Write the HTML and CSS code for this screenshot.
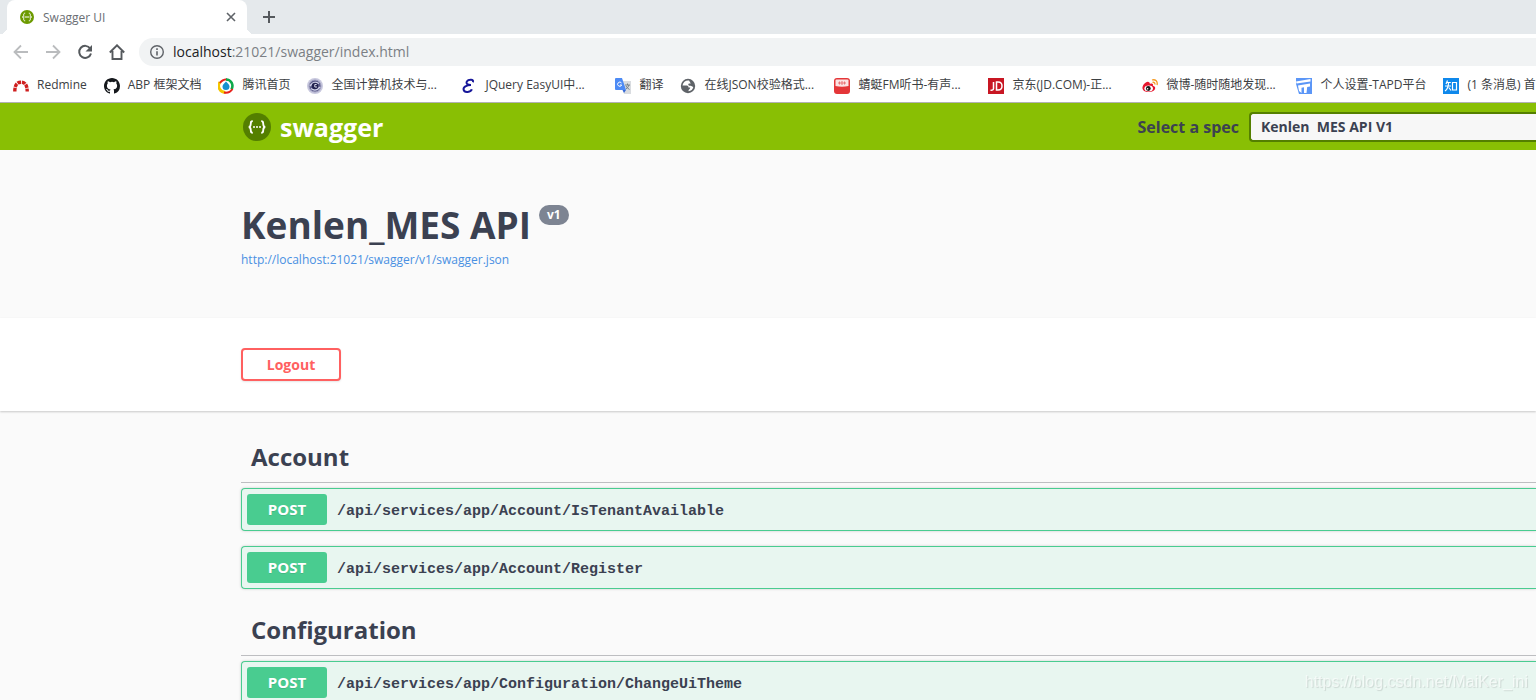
FILE: index.html
```html
<!DOCTYPE html>
<html lang="zh-CN">
<head>
<meta charset="utf-8">
<title>Swagger UI</title>
<link rel="stylesheet" href="styles.css">
</head>
<body>
<header class="browser">
  <div class="tabs">
    <div class="tab">
      <svg class="tab-icon" viewBox="0 0 16 16"><circle cx="8" cy="8" r="7" fill="#6c9a00"/><path d="M6.200 4.200c-1.600 0-1.500.8-1.500 1.900S4.600 8 3.300 8c1.300 0 1.400.8 1.400 1.900s-.1 1.900 1.500 1.900M9.800 4.200c1.600 0 1.500.8 1.500 1.900S11.400 8 12.700 8c-1.300 0-1.400.8-1.400 1.900s.1 1.900-1.500 1.900M5.500 8h5" fill="none" stroke="#fff" stroke-width="1"/></svg>
      <span class="tab-title">Swagger UI</span>
      <button class="icon-button" aria-label="Close tab"><svg width="16" height="16" viewBox="0 0 16 16"><path d="M4 4l8 8M12 4l-8 8" stroke="#5f6368" stroke-width="1.600"/></svg></button>
    </div>
    <button class="icon-button" aria-label="New tab"><svg width="16" height="16" viewBox="0 0 16 16"><path d="M8 2v12M2 8h12" stroke="#55595d" stroke-width="2"/></svg></button>
  </div>
  <nav class="toolbar">
    <button class="icon-button" aria-label="Back"><svg width="16" height="16" viewBox="0 0 16 16"><path d="M15 8H2M8 1.500L1.500 8 8 14.500" fill="none" stroke="#babcbe" stroke-width="1.800"/></svg></button>
    <button class="icon-button" aria-label="Forward"><svg width="16" height="16" viewBox="0 0 16 16"><path d="M1 8h13M8 1.500L14.500 8 8 14.500" fill="none" stroke="#babcbe" stroke-width="1.800"/></svg></button>
    <button class="icon-button" aria-label="Reload"><svg width="16" height="16" viewBox="0 0 16 16"><path d="M13.200 4.500A6 6 0 1 0 14 9.500" fill="none" stroke="#55595d" stroke-width="2"/><path d="M15 1v6.500H8.500z" fill="#55595d"/></svg></button>
    <button class="icon-button" aria-label="Home"><svg width="16" height="16" viewBox="0 0 16 16"><path d="M.8 8.500L8 1.300l7.200 7.200M3.500 7v8h9V7" fill="none" stroke="#55595d" stroke-width="1.900"/></svg></button>
    <div class="address">
      <svg width="16" height="16" viewBox="0 0 16 16"><circle cx="8" cy="8" r="6.300" fill="none" stroke="#5f6368" stroke-width="1.400"/><path d="M8 7.200v4.300M8 4.300v1.700" stroke="#5f6368" stroke-width="1.600"/></svg>
      <span class="url"><span class="host">localhost</span>:21021/swagger/index.html</span>
    </div>
  </nav>
  <nav class="bookmarks">
    <a class="bookmark" href="#"><svg viewBox="0 0 16 16"><path d="M1.800 13.500C1.800 7 4 4.200 8 4.200s6.200 2.800 6.200 9.300" fill="none" stroke="#cf1f1f" stroke-width="3.400" stroke-dasharray="3.700 .8"/></svg><span>Redmine</span></a>
    <a class="bookmark" href="#"><svg viewBox="0 0 16 16"><path fill="#15181c" d="M8 0C3.580 0 0 3.580 0 8c0 3.540 2.290 6.530 5.470 7.590.4.070.55-.17.55-.38 0-.19-.01-.82-.01-1.490-2.010.37-2.530-.49-2.690-.94-.09-.23-.48-.94-.82-1.130-.28-.15-.68-.52-.01-.53.63-.01 1.080.58 1.230.82.72 1.210 1.870.87 2.330.66.070-.52.28-.87.51-1.070-1.780-.2-3.640-.89-3.640-3.950 0-.87.31-1.590.82-2.150-.08-.2-.36-1.020.08-2.120 0 0 .67-.21 2.200.82a7.600 7.600 0 0 1 4 0c1.530-1.040 2.200-.82 2.200-.82.44 1.100.16 1.920.08 2.120.51.56.82 1.270.82 2.150 0 3.070-1.870 3.750-3.650 3.950.29.25.54.73.54 1.480 0 1.070-.01 1.930-.01 2.200 0 .21.15.46.55.38A8 8 0 0 0 16 8c0-4.420-3.580-8-8-8z"/></svg><span>ABP 框架文档</span></a>
    <a class="bookmark" href="#"><svg viewBox="0 0 16 16"><g fill="none"><path d="M7.500 14.500A6.600 6.600 0 0 1 2 4" stroke="#f4c600" stroke-width="2.800"/><path d="M2 5Q4 1.500 9 1.200" stroke="#e7211a" stroke-width="2"/><path d="M8 1.500c5 0 8 5 5.500 10" stroke="#0ca94b" stroke-width="2.600"/><path d="M14.500 11Q11.500 15.500 6 14.600" stroke="#e7211a" stroke-width="2"/></g><path d="M8 3.500c1 1.500 3.500 2.600 3.500 5.100a3.500 3.500 0 0 1-7 0C4.500 6.100 7 5 8 3.500z" fill="#1590d0"/></svg><span>腾讯首页</span></a>
    <a class="bookmark bookmark-long" href="#"><svg viewBox="0 0 16 16"><circle cx="8" cy="8" r="8" fill="#c8c8de"/><circle cx="8" cy="8" r="6" fill="#5d5d8c" stroke="#a0a0c0"/><path d="M3 8Q6.500 2.500 12 5.500M4 10.500Q9 14 13 9" fill="none" stroke="#d1d2e8" stroke-width="1.400"/><circle cx="8" cy="8" r="3.200" fill="#22224f"/><path d="M9.700 6.500H7.800V9H10" fill="none" stroke="#d9d9ec"/></svg><span>全国计算机技术与...</span></a>
    <a class="bookmark bookmark-long" href="#"><svg viewBox="0 0 16 16"><path d="M11.800 4.200C13.500 1 7.500.8 5.800 3.600c-1.200 2.200.8 3.400 4.200 3.400C5.500 7 2 9.200 2.600 11.800c.8 3.400 7.500 2.400 8.200-.6" fill="none" stroke="#17179a" stroke-width="2"/></svg><span>JQuery EasyUI中...</span></a>
    <a class="bookmark" href="#"><svg viewBox="0 0 16 16"><path d="M6 3h10v13H9z" fill="#d9dce0"/><path d="M0 1q0-1 1-1h6l4 12H1q-1 0-1-1z" fill="#4d8bf5"/><path d="M7.500 12H11l-2 3z" fill="#3367d6"/><path d="M6.500 5A2.100 2.100 0 1 0 6.700 7H5" fill="none" stroke="#fff"/><path d="M10 7h5M12.500 5.500V7M14 7q-1 3-3 4M11 8q1 2 3.500 3.500" fill="none" stroke="#6d7b85" stroke-width=".9"/></svg><span>翻译</span></a>
    <a class="bookmark bookmark-long" href="#"><svg viewBox="0 0 16 16"><circle cx="8" cy="8" r="7.200" fill="#5f6368"/><path d="M9 2.500C6 2 3 4 2.500 7.500h4.300c1.200 0 1.700.8 1.700 2h1.700c0 2-1.700 1.500-1.700 3.800 2.500-.2 4.500-2 4.800-4.300l-2.500-1.300H9.300c-1.400 0-1.400-2.200 0-2.200h1.500z" fill="#fff"/></svg><span>在线JSON校验格式...</span></a>
    <a class="bookmark bookmark-long" href="#"><svg viewBox="0 0 16 16"><rect width="16" height="16" rx="3" fill="#e43638"/><path d="M2.500 1.500h11q1 0 1 1V8q-6.500 1.500-13 0V2.500q0-1 1-1z" fill="#fbe3e3"/><path d="M4 5h8M8 3v4M5.500 3.500v3M10.500 3.500v3" stroke="#e97577"/></svg><span>蜻蜓FM听书-有声...</span></a>
    <a class="bookmark bookmark-long" href="#"><svg viewBox="0 0 16 16"><path d="M0 0h16v16H0z" fill="#c81623"/><path d="M5.500 4v6.500q0 2-3 1.700M8.500 4v8h1.500q4 0 4-4t-4-4z" fill="none" stroke="#fff" stroke-width="1.500"/></svg><span>京东(JD.COM)-正...</span></a>
    <a class="bookmark bookmark-long" href="#"><svg viewBox="0 0 16 16"><path d="M6.500 4C4 3 0 7.500.5 10.500c.7 5 12.500 4.800 12.700-.5.100-1.500-1.500-2-2.300-2.300.6-2-1-2.600-3-1.700C8 5.200 7.500 4.300 6.500 4z" fill="#e6162d"/><ellipse cx="6.700" cy="10.400" rx="4.300" ry="3" fill="#fff"/><circle cx="6.300" cy="10.500" r="2.400" fill="#191919"/><circle cx="5.600" cy="10.800" r=".8" fill="#fff"/><path d="M10 2c3.500-1 6 1.500 5 5M10.500 4.300c1.700-.3 2.700.7 2.300 2.200" fill="none" stroke="#f59a23" stroke-width="1.300"/></svg><span>微博-随时随地发现...</span></a>
    <a class="bookmark" href="#"><svg viewBox="0 0 16 16"><path d="M0 0h16v16H3L0 6z" fill="#5b96f7"/><path d="M0 3.500L14.500 1v2.500L.5 5.500zM2 7.500L14 5.500v3l-2.800.5-.7 6H8V9.300L5.500 9.700V15L3 13z" fill="#fff"/></svg><span>个人设置-TAPD平台</span></a>
    <a class="bookmark" href="#"><svg viewBox="0 0 16 16"><path d="M0 0h16v16H0z" fill="#0f88eb"/><path d="M4.500 2.500L3 6M3.500 4.500h4.300M2 8h6M5.500 4.500c0 4-.5 6.500-3.500 8.500M5.800 9.500L8 12.500M9.500 4.500h4v7.500h-4z" fill="none" stroke="#fff" stroke-width="1.200"/></svg><span>(1 条消息) 首</span></a>
  </nav>
</header>
<main class="swagger">
  <div class="topbar">
    <a class="brand" href="#">
      <svg width="30" height="30" viewBox="0 0 30 30"><circle cx="15" cy="15" r="14" fill="#547f00"/><path d="M10.800 9.200c-2 0-2 .8-2 2.300 0 2-.1 3.400-2.100 3.500 2 .1 2.100 1.500 2.100 3.500 0 1.500 0 2.300 2 2.300M19.200 9.200c2 0 2 .8 2 2.300 0 2 .1 3.400 2.100 3.500-2 .1-2.100 1.500-2.100 3.500 0 1.500 0 2.300-2 2.300" fill="none" stroke="#fff" stroke-width="1.800"/><g fill="#fff"><circle cx="12" cy="15" r="1"/><circle cx="15" cy="15" r="1"/><circle cx="18" cy="15" r="1"/></g></svg>
      <span>swagger</span>
    </a>
    <label class="spec-label" for="spec">Select a spec</label>
    <select class="spec-select" id="spec"><option>Kenlen&nbsp; MES API V1</option></select>
  </div>
  <section class="info">
    <h1 class="title">Kenlen_MES API<small class="version">v1</small></h1>
    <a class="definition" href="#">http://localhost:21021/swagger/v1/swagger.json</a>
  </section>
  <section class="scheme"><button class="logout">Logout</button></section>
  <div class="operations">
    <section class="group">
      <h2 class="tag">Account</h2>
      <button class="operation"><span class="method">POST</span><code class="path">/api/services/app/Account/IsTenantAvailable</code></button>
      <button class="operation"><span class="method">POST</span><code class="path">/api/services/app/Account/Register</code></button>
    </section>
    <section class="group">
      <h2 class="tag">Configuration</h2>
      <button class="operation"><span class="method">POST</span><code class="path">/api/services/app/Configuration/ChangeUiTheme</code></button>
    </section>
  </div>
</main>
<div class="watermark">https://blog.csdn.net/MaiKer_ini</div>
</body>
</html>
```
FILE: styles.css
```css
* { box-sizing: border-box; }

body {
  margin: 0;
  height: 100vh;
  overflow: hidden;
  background: #fafafa;
  color: #3b4151;
  font-family: "Open Sans", "Noto Sans CJK SC", sans-serif;
}

a { text-decoration: none; }
button { font-family: inherit; cursor: pointer; }

.icon-button {
  display: flex;
  padding: 0;
  border: 0;
  background: none;
}

/* Browser frame */
.browser {
  background: #fff;
  border-bottom: 1px solid #b2b2b4;
}

.tabs {
  display: flex;
  align-items: center;
  gap: 14px;
  height: 34px;
  padding-left: 7px;
  background: #e5e9ec;
}

.tab {
  position: relative;
  display: flex;
  align-items: center;
  gap: 8px;
  width: 240px;
  height: 34px;
  padding: 0 8px 0 12px;
  border-radius: 8px 8px 0 0;
  background: #fff;
}

.tab::before,
.tab::after {
  content: "";
  position: absolute;
  bottom: 0;
  width: 7px;
  height: 7px;
}

.tab::before {
  right: 100%;
  background: radial-gradient(circle at 0 0, #e5e9ec 7px, #fff 7px);
}

.tab::after {
  left: 100%;
  background: radial-gradient(circle at 100% 0, #e5e9ec 7px, #fff 7px);
}

.tab-icon { width: 16px; height: 16px; }

.tab-title {
  flex: 1;
  color: #6a6e73;
  font-size: 12px;
}

.toolbar {
  display: flex;
  align-items: center;
  gap: 16px;
  height: 36px;
  padding-left: 13px;
}

.address {
  flex: 1;
  display: flex;
  align-items: center;
  gap: 8px;
  height: 28px;
  margin-left: -2px;
  padding-left: 10px;
  border-radius: 14px 0 0 14px;
  background: #f1f3f4;
}

.url {
  padding-bottom: 2px;
  color: #7b7f84;
  font-size: 14px;
}

.host { color: #202124; }

.bookmarks {
  display: flex;
  align-items: center;
  gap: 17px;
  height: 32px;
  padding-left: 13px;
  overflow: hidden;
}

.bookmark {
  flex: none;
  display: flex;
  align-items: center;
  gap: 8px;
  color: #3c4043;
  font-size: 12px;
  line-height: 18px;
  white-space: nowrap;
}

.bookmark svg { width: 16px; height: 16px; }
.bookmark span { padding-bottom: 2px; }
.bookmark-long { width: 137px; }

/* Swagger page */
.topbar {
  display: flex;
  align-items: center;
  height: 47px;
  padding-left: 242px;
  background: #89bf04;
}

.brand {
  display: flex;
  align-items: center;
  gap: 8px;
  color: #fff;
  font-size: 25px;
  font-weight: 700;
}

.spec-label {
  margin-left: auto;
  padding-right: 10px;
  font-size: 16px;
  font-weight: 700;
}

.spec-select {
  appearance: none;
  width: 287px;
  height: 30px;
  padding: 0 10px;
  border: 2px solid #547f00;
  border-right: 0;
  border-radius: 4px 0 0 4px;
  background: #f7f7f7;
  color: #3b4151;
  font-family: inherit;
  font-size: 14px;
  font-weight: 700;
}

.info { padding: 50px 0 48px 241px; }

.title {
  display: flex;
  align-items: flex-start;
  gap: 8px;
  margin: 0;
  font-size: 37px;
  line-height: 50px;
}

.version {
  margin-top: 5px;
  padding: 0 8px;
  border-radius: 20px;
  background: #7d8492;
  color: #fff;
  font-size: 12px;
  line-height: 20px;
}

.definition {
  display: block;
  color: #4990e2;
  font-size: 12px;
  line-height: 20px;
}

.scheme {
  padding: 30px 0 30px 241px;
  background: #fff;
  box-shadow: 0 1px 2px rgba(0, 0, 0, 0.2);
}

.logout {
  display: block;
  width: 100px;
  height: 33px;
  border: 2px solid #ff6060;
  border-radius: 4px;
  background: #fff;
  box-shadow: 0 1px 2px rgba(0, 0, 0, 0.1);
  color: #ff6060;
  font-size: 14px;
  font-weight: 700;
}

.operations { padding: 20px 0 0 241px; }

.tag {
  height: 52px;
  margin: 0 0 5px;
  padding: 10px;
  border-bottom: 1px solid #bdbec1;
  font-size: 24px;
  line-height: 32px;
}

.operation {
  display: flex;
  align-items: center;
  gap: 10px;
  width: 100%;
  height: 43px;
  margin-bottom: 15px;
  padding: 5px;
  border: 1px solid #49cc90;
  border-right: 0;
  border-radius: 4px 0 0 4px;
  background: #e8f6f0;
  box-shadow: 0 0 3px rgba(0, 0, 0, 0.19);
  color: #3b4151;
}

.method {
  width: 80px;
  border-radius: 3px;
  background: #49cc90;
  color: #fff;
  font-size: 15px;
  font-weight: 700;
  line-height: 31px;
  text-align: center;
  text-shadow: 0 1px 0 rgba(0, 0, 0, 0.1);
}

.path {
  padding-top: 4px;
  font-family: "Liberation Mono", monospace;
  font-size: 15px;
  font-weight: 700;
}

.watermark {
  position: fixed;
  right: 8px;
  bottom: 8px;
  color: rgba(255, 255, 255, 0.6);
  font-family: "Liberation Sans", sans-serif;
  font-size: 16px;
  line-height: 20px;
  text-shadow: 1px 1px 1px rgba(0, 0, 0, 0.12);
}
```
